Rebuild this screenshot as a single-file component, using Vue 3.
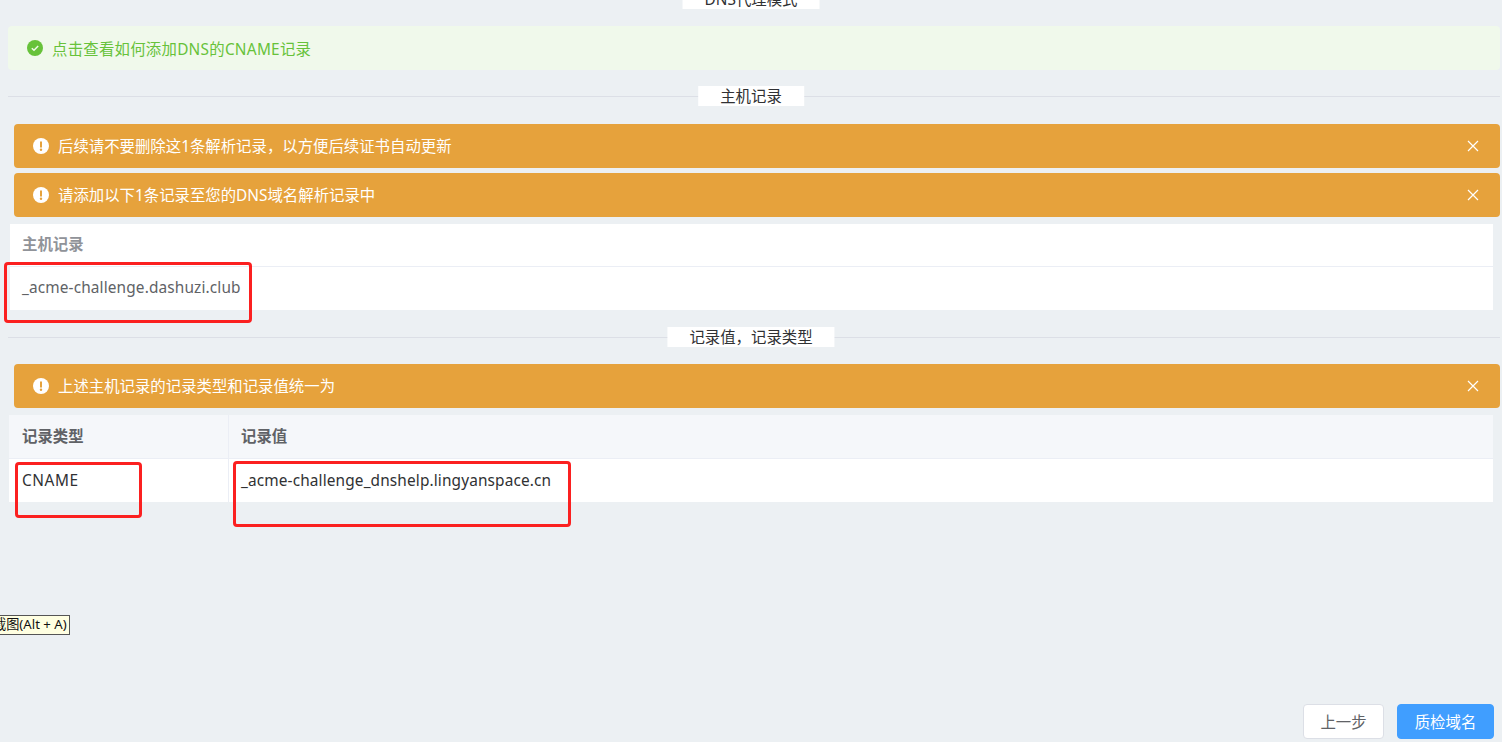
<script setup>
const warnings = {
  top: ['后续请不要删除这1条解析记录，以方便后续证书自动更新', '请添加以下1条记录至您的DNS域名解析记录中'],
  value: ['上述主机记录的记录类型和记录值统一为'],
};
</script>

<template>
  <div class="page">
    <div class="divider first"><span class="divider-text">DNS代理模式</span></div>

    <div class="alert success">
      <svg class="alert-icon" viewBox="0 0 16 16">
        <circle cx="8" cy="8" r="8" fill="#67c23a" />
        <path d="M4.8 8.2l2.2 2.1 4.2-4.3" fill="none" stroke="#f0f9eb" stroke-width="1.5" />
      </svg>
      <span class="success-text">点击查看如何添加DNS的CNAME记录</span>
    </div>

    <div class="divider host"><span class="divider-text">主机记录</span></div>

    <div class="warnings">
      <div v-for="text in warnings.top" :key="text" class="alert warning">
        <svg class="alert-icon" viewBox="0 0 16 16">
          <circle cx="8" cy="8" r="8" fill="#fff" />
          <path d="M8 3.4v6" stroke="#e6a23c" stroke-width="2" />
          <circle cx="8" cy="11.7" r="1.2" fill="#e6a23c" />
        </svg>
        <span class="warning-text">{{ text }}</span>
        <svg class="close" viewBox="0 0 12 12">
          <path d="M1 1l10 10M11 1L1 11" stroke="#fff" stroke-width="1.2" fill="none" />
        </svg>
      </div>
    </div>

    <div class="table host-table">
      <div class="row head plain"><div class="cell">主机记录</div></div>
      <div class="row body muted"><div class="cell latin">_acme-challenge.dashuzi.club</div></div>
    </div>

    <div class="divider value"><span class="divider-text">记录值，记录类型</span></div>

    <div class="warnings value-warnings">
      <div v-for="text in warnings.value" :key="text" class="alert warning">
        <svg class="alert-icon" viewBox="0 0 16 16">
          <circle cx="8" cy="8" r="8" fill="#fff" />
          <path d="M8 3.4v6" stroke="#e6a23c" stroke-width="2" />
          <circle cx="8" cy="11.7" r="1.2" fill="#e6a23c" />
        </svg>
        <span class="warning-text">{{ text }}</span>
        <svg class="close" viewBox="0 0 12 12">
          <path d="M1 1l10 10M11 1L1 11" stroke="#fff" stroke-width="1.2" fill="none" />
        </svg>
      </div>
    </div>

    <div class="table value-table">
      <div class="row head tinted">
        <div class="cell type">记录类型</div>
        <div class="cell">记录值</div>
      </div>
      <div class="row body">
        <div class="cell type cname">CNAME</div>
        <div class="cell latin">_acme-challenge_dnshelp.lingyanspace.cn</div>
      </div>
    </div>

    <div class="actions">
      <button class="btn">上一步</button>
      <button class="btn primary">质检域名</button>
    </div>

    <!-- screenshot leftovers that sit on top of the page -->
    <div class="mark mark-host"></div>
    <div class="mark mark-type"></div>
    <div class="mark mark-value"></div>
    <div class="shot-tip">截图(Alt + A)</div>
  </div>
</template>

<style scoped>
.page {
  position: relative;
  box-sizing: border-box;
  display: flex;
  flex-direction: column;
  width: 1502px;
  height: 742px;
  padding: 0 2px 3px 8px;
  overflow: hidden;
  background: #ecf0f3;
  font-family: "Noto Sans", "Noto Sans CJK SC", sans-serif;
  font-size: 15.4px;
  color: #303133;
}
.divider {
  position: relative;
  flex: none;
  height: 1px;
  background: #dcdfe6;
}
.divider.first {
  margin-top: -1px;
}
.divider.host {
  margin-top: 26px;
}
.divider.value {
  margin-top: 27px;
}
.divider-text {
  position: absolute;
  top: -10px;
  left: 743px;
  height: 20px;
  line-height: 22px;
  padding: 0 22px;
  background: #fff;
  white-space: nowrap;
  transform: translateX(-50%);
}
.alert {
  display: flex;
  align-items: center;
  box-sizing: border-box;
  height: 44px;
  border-radius: 4px;
  flex: none;
}
.success {
  margin-top: 26px;
  padding-left: 19px;
  background: #f0f9eb;
}
.success-text {
  color: #67c23a;
  letter-spacing: 0.25px;
}
.alert-icon {
  flex: none;
  width: 16px;
  height: 16px;
  margin-right: 9px;
}
.warnings {
  display: flex;
  flex-direction: column;
  gap: 5px;
  margin: 27px 0 0 6px;
}
.value-warnings {
  margin-top: 26px;
}
.warning {
  padding: 0 21px 0 19px;
  background: #e6a23c;
  color: #fff;
}
.warning-text {
  flex: 1;
  padding-bottom: 2px;
}
.close {
  width: 12px;
  height: 12px;
  margin-top: -1px;
}
.table {
  flex: none;
  margin: 7px 7px 0 2px;
  background: #fff;
}
.value-table {
  margin-left: 1px;
}
.row {
  display: flex;
  box-sizing: border-box;
  height: 43px;
  border-bottom: 1px solid #ebeef5;
}
.row.body {
  border-bottom: 0;
}
.head {
  font-weight: 700;
  color: #606266;
}
.plain {
  color: #909399;
}
.tinted {
  height: 44px;
  background: #f5f7fa;
}
.muted {
  color: #606266;
}
.cell {
  flex: 1;
  box-sizing: border-box;
  padding: 9px 12px;
  line-height: 23px;
}
.value-table .cell {
  padding-top: 10px;
}
.value-table .type {
  padding-left: 13px;
}
.latin {
  letter-spacing: 0.13px;
}
.cname {
  letter-spacing: 0.6px;
}
.type {
  flex: none;
  width: 220px;
  border-right: 1px solid #ebeef5;
}
.actions {
  display: flex;
  justify-content: flex-end;
  gap: 13px;
  margin: auto 6px 0 0;
}
.btn {
  box-sizing: border-box;
  width: 81px;
  height: 35px;
  border: 1px solid #dcdfe6;
  border-radius: 4px;
  background: #fff;
  color: #606266;
  font: inherit;
}
.primary {
  width: 97px;
  border-color: #409eff;
  background: #409eff;
  color: #fff;
}
.mark {
  position: absolute;
  box-sizing: border-box;
  border: 3px solid #fb2020;
  border-radius: 4px;
}
.mark-host {
  left: 4px;
  top: 262px;
  width: 248px;
  height: 61px;
}
.mark-type {
  left: 15px;
  top: 462px;
  width: 127px;
  height: 56px;
}
.mark-value {
  left: 233px;
  top: 461px;
  width: 338px;
  height: 66px;
}
.shot-tip {
  position: absolute;
  left: -11px;
  top: 615px;
  box-sizing: border-box;
  height: 20px;
  padding: 0 2px 0 3px;
  border: 1px solid #555;
  background: #ffffe1;
  color: #111;
  font-size: 13.2px;
  line-height: 16px;
  white-space: nowrap;
}
</style>
